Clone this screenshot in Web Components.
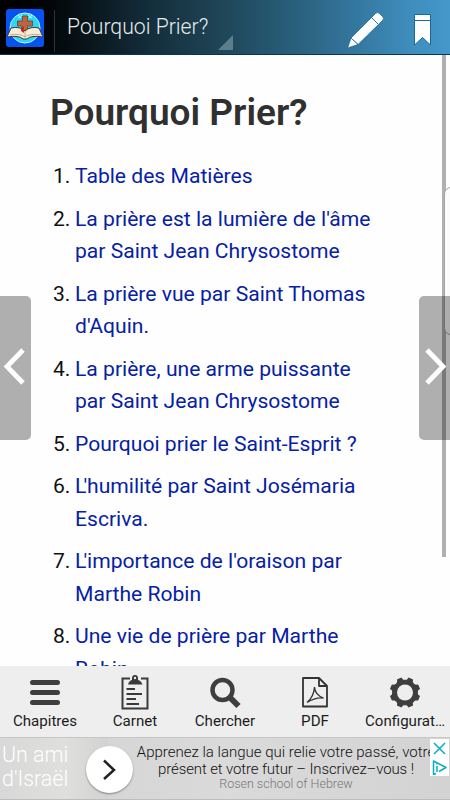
<!DOCTYPE html>
<html lang="fr">
<head>
<meta charset="utf-8">
<title>Pourquoi Prier?</title>
<style>
    html, body {
        margin: 0;
        height: 100%;
        overflow: hidden;
        font-family: Roboto, "Liberation Sans", sans-serif;
        background: #fefefe;
    }
</style>
</head>
<body>
<reader-app></reader-app>

<script>
class AppHeader extends HTMLElement {
    constructor() {
        super();
        this.attachShadow({mode: 'open'});
        this.shadowRoot.innerHTML = `
            <style>
                :host {
                    display: flex;
                    box-sizing: border-box;
                    flex: none;
                    height: 55px;
                    padding-left: 6px;
                    color: #e6ebed;
                    background: linear-gradient(90deg, #000 0, #020608 50px, #142e3c 150px, #1d4152 210px, #2a617f 300px, #3e8dbd 410px, #4498ca 450px);
                    border-bottom: 1px solid #07345c;
                }
                .logo { flex: none; margin-top: 9px; }
                .line { width: 1px; height: 42px; margin: 10px 0 0 10px; background: #2b3439; }
                .title {
                    position: relative;
                    width: 178px;
                    height: 54px;
                    line-height: 54px;
                    font-size: 21.2px;
                    font-weight: 300;
                    margin-left: 12px;
                    white-space: nowrap;
                }
                .corner { position: absolute; right: 12px; bottom: 4px; }
                .actions { flex: 1; }
                svg { display: block; }
            </style>
            <svg class="logo" width="38" height="38" viewBox="0 0 38 38">
                <rect width="38" height="38" rx="3" fill="#0753f2"/>
                <circle cx="19" cy="19" r="15" fill="#27d8fa" stroke="#c5f5ff" stroke-width="1"/>
                <path d="M12 9l4-3M26 9l-4-3M12 6l3 3M26 6l-3 3" stroke="#c2fbff" stroke-width="1"/>
                <path d="M16.5 7h5v5h5v5h-5v10h-5V17h-5v-5h5z" fill="#bd6540" stroke="#713c2b" stroke-width=".8"/>
                <path d="M1 28L5 19q9-2 14 3 5-5 14-3l4 9q-12-2-16 2h-4q-4-4-16-2z" fill="#f7ecd6" stroke="#47352b"/>
                <path d="M4 26q10-2 15 2 5-4 16-2M19 22v6" fill="none" stroke="#a89478" stroke-width=".7"/>
                <path d="M15 18h3v6l-3-2z" fill="#c8242b"/>
            </svg>
            <div class="line"></div>
            <div class="title"><slot></slot>
                <svg class="corner" width="15" height="15"><path d="M15 0v15H0z" fill="#5b7d8e"/></svg>
            </div>
            <div class="actions">
                <svg width="205" height="54" viewBox="245 0 205 54">
                    <g fill="#fff" stroke="#176aa0" stroke-width=".8">
                        <path d="M371.500 17.500l4-4q2-2 4 0l3 3q2 2 0 4l-4 4z"/>
                        <path d="M371.500 17.500l7 7-20.500 20-7-6.500z"/>
                        <path d="M351 38l7 6.500-10.500 3.500z"/>
                    </g>
                    <path d="M414.500 14.500h16v30.500l-8-7.500-8 7.500zM414.500 20.500h16" fill="#fff" stroke="#176aa0"/>
                </svg>
            </div>
        `;
    }
}

class BookPage extends HTMLElement {
    constructor() {
        super();
        this.attachShadow({mode: 'open'});
        this.shadowRoot.innerHTML = `
            <style>
                :host {
                    display: block;
                    position: relative;
                    flex: 1;
                    min-height: 0;
                    overflow: hidden;
                    background: #fefefe;
                }
                h1 {
                    margin: 0;
                    padding: 33px 0 0 50px;
                    font-size: 37px;
                    line-height: 50px;
                    font-weight: 600;
                    color: #303030;
                    white-space: nowrap;
                }
                ol {
                    margin: 22px 0 0;
                    padding: 0 60px 0 75px;
                }
                .track {
                    position: absolute;
                    left: 442px;
                    top: 0;
                    width: 4px;
                    height: 502px;
                    background: #b0b0b0;
                }
                .thumb {
                    position: absolute;
                    box-sizing: border-box;
                    left: 444px;
                    top: 132px;
                    width: 14px;
                    height: 148px;
                    border: 1px solid #a4a4a4;
                    border-radius: 8px;
                    background: #fbfbfb;
                }
            </style>
            <h1><slot name="title"></slot></h1>
            <ol><slot></slot></ol>
            <div class="track"></div>
            <div class="thumb"></div>
            <slot name="nav"></slot>
        `;
    }
}

class ChapterLink extends HTMLElement {
    constructor() {
        super();
        this.attachShadow({mode: 'open'});
    }

    connectedCallback() {
        this.shadowRoot.innerHTML = `
            <style>
                :host {
                    display: flex;
                    margin: 0 0 10px -22px;
                    font-size: 21.1px;
                    font-weight: 370;
                    line-height: 32.5px;
                    white-space: nowrap;
                }
                .number { width: 22px; flex: none; color: #111; }
                a { color: #0621a5; }
                ::slotted(.kern) { letter-spacing: -3px; }
            </style>
            <span class="number">${this.getAttribute('number')}.</span>
            <a><slot></slot></a>
        `;
    }
}

class PageTurn extends HTMLElement {
    constructor() {
        super();
        this.attachShadow({mode: 'open'});
    }

    connectedCallback() {
        const next = this.hasAttribute('next');
        const arrow = next ? 'M8 54L24 70.500 8 87' : 'M23 54L7 70.500 23 87';
        this.shadowRoot.innerHTML = `
            <style>
                :host {
                    position: absolute;
                    top: 241px;
                    ${next ? 'right: 0' : 'left: 0'};
                    width: 31px;
                    height: 144px;
                    background: rgba(0, 0, 0, 0.31);
                    border-radius: ${next ? '5px 0 0 5px' : '0 5px 5px 0'};
                }
                svg { display: block; }
            </style>
            <svg width="31" height="144"><path d="${arrow}" fill="none" stroke="#fff" stroke-width="4.800"/></svg>
        `;
    }
}

// Gear outline: eight teeth around a ring
function gearPath() {
    let d = '';
    for (let i = 0; i < 8; i++) {
        const angle = (i * 45 + 22.5) * Math.PI / 180;
        const point = (r, t) => (20 + r * Math.sin(angle + t)).toFixed(2) + ' ' + (19.5 - r * Math.cos(angle + t)).toFixed(2);
        d += `${i ? 'L' : 'M'}${point(14.8, -0.13)}L${point(14.8, 0.13)}L${point(12.8, 0.2)}Q${point(11.6, 0.39)} ${point(12.8, 0.585)}`;
    }
    return d + 'z';
}

const icons = {
    list: '<path d="M7.500 9.500h25M7.500 19.500h25M7.500 29.500h25" stroke="#3e3e3e" stroke-width="5" stroke-linecap="round"/>',
    clipboard: `
        <path d="M15 5.500H7.500v30h25v-30H26" fill="none" stroke="#3a3a3a" stroke-width="2"/>
        <path d="M13 11.500q1-4 4-4.500-.5-5 3-5t3 5q3 .5 4.500 4.500z" fill="#3a3a3a"/><circle cx="20" cy="5" r="1.200" fill="#eee"/>
        <path d="M11.500 16h8.500M11.500 21h15.500M11.500 26h9.500M11.500 31h12.500" stroke="#3a3a3a" stroke-width="2"/>`,
    search: '<circle cx="17.500" cy="17" r="10" fill="none" stroke="#3e3e3e" stroke-width="4.500"/><path d="M24.500 24l9 9" stroke="#3e3e3e" stroke-width="6"/>',
    pdf: `
        <path d="M8 5h16l8 8v20.500H8zM24 5v8h8" fill="none" stroke="#333" stroke-width="1.800" stroke-linejoin="round"/>
        <path d="M12 29.500q7-6 7.500-15.500.5 8 9 11-8-1-16.500 4.500" fill="none" stroke="#333" stroke-width="1.300"/>`,
    gear: `<path d="${gearPath()}" fill="#3e3e3e" stroke="#3e3e3e" stroke-width="1.200" stroke-linejoin="round"/><circle cx="20" cy="19.500" r="8" fill="#eee"/>`
};

class ToolButton extends HTMLElement {
    constructor() {
        super();
        this.attachShadow({mode: 'open'});
    }

    connectedCallback() {
        this.shadowRoot.innerHTML = `
            <style>
                :host {
                    display: flex;
                    flex-direction: column;
                    align-items: center;
                    width: 90px;
                    padding-top: 7px;
                    font-size: 15.1px;
                    font-weight: 375;
                    line-height: 20px;
                    color: #1c1c1c;
                }
                svg { display: block; margin-bottom: -2px; }
                span { white-space: nowrap; }
            </style>
            <svg width="40" height="40" viewBox="0 0 40 40">${icons[this.getAttribute('icon')]}</svg>
            <span><slot></slot></span>
        `;
    }
}

class ToolBar extends HTMLElement {
    constructor() {
        super();
        this.attachShadow({mode: 'open'});
        this.shadowRoot.innerHTML = `
            <style>
                :host {
                    display: flex;
                    flex: none;
                    height: 71px;
                    background: #eee;
                }
            </style>
            <slot></slot>
        `;
    }
}

class AdBanner extends HTMLElement {
    constructor() {
        super();
        this.attachShadow({mode: 'open'});
        this.shadowRoot.innerHTML = `
            <style>
                :host {
                    display: flex;
                    position: relative;
                    box-sizing: border-box;
                    flex: none;
                    height: 63px;
                    border-top: 1px solid #c6c6c6;
                    border-bottom: 1px solid #bdbdbd;
                    background: linear-gradient(90deg, #d2d2d2, #dadada 50%, #d3d3d3);
                }
                .brand {
                    box-sizing: border-box;
                    flex: none;
                    width: 108px;
                    padding: 5px 0 0 2px;
                    font-size: 21.4px;
                    line-height: 24px;
                    font-weight: 300;
                    color: #fff;
                    background: linear-gradient(90deg, #d8d8d8, #dfdfdd 60%, #d2d2d2);
                }
                .go {
                    position: absolute;
                    left: 86px;
                    top: 8px;
                    width: 47px;
                    height: 47px;
                    border-radius: 50%;
                    background: #fff;
                    box-shadow: 0 1px 2px rgba(0, 0, 0, 0.4);
                }
                .copy {
                    flex: none;
                    width: 356px;
                    padding-top: 6px;
                    text-align: center;
                    font-size: 15px;
                    line-height: 16.500px;
                    font-weight: 300;
                    color: #111;
                    white-space: nowrap;
                }
                ::slotted(.tight) { letter-spacing: -0.12px; }
                .small { font-size: 12.5px; line-height: 13px; color: #777; }
                .marks {
                    position: absolute;
                    right: 1px;
                    top: 1px;
                    width: 19px;
                    height: 37px;
                    background: #fff;
                }
                svg { display: block; }
            </style>
            <div class="brand"><slot name="brand"></slot></div>
            <div class="go"><svg width="47" height="47"><path d="M18 14.500l10 9.500-10 9" fill="none" stroke="#222" stroke-width="2.500"/></svg></div>
            <div class="copy"><slot></slot><div class="small"><slot name="advertiser"></slot></div></div>
            <div class="marks">
                <svg width="19" height="37" fill="none" stroke="#08aec8" stroke-width="1.500">
                    <path d="M4 4l11 11M15 4L4 15M6 34.500l-2.500 1V22L16 28.500l-7 4M7 27v6" stroke-linejoin="round"/>
                    <path d="M7 24v1.600"/>
                </svg>
            </div>
        `;
    }
}

class ReaderApp extends HTMLElement {
    constructor() {
        super();
        this.attachShadow({mode: 'open'});
        this.shadowRoot.innerHTML = `
            <style>
                :host {
                    display: flex;
                    flex-direction: column;
                    width: 450px;
                    height: 800px;
                    overflow: hidden;
                }
            </style>
            <app-header>Pourquoi Prier?</app-header>
            <book-page>
                <span slot="title">Pourquoi Prier?</span>
                <chapter-link number="1">Table des Matières</chapter-link>
                <chapter-link number="2">La prière est la lumière de l'âme<br>par Saint Jean Chrysostome</chapter-link>
                <chapter-link number="3">La prière vue par Saint Thomas<br>d'Aquin.</chapter-link>
                <chapter-link number="4">La prière, une arme puissante<br>par Saint Jean Chrysostome</chapter-link>
                <chapter-link number="5">Pourquoi prier le Saint-Esprit ?</chapter-link>
                <chapter-link number="6"><span class="kern">L</span>'humilité par Saint Josémaria<br>Escriva.</chapter-link>
                <chapter-link number="7"><span class="kern">L</span>'importance de l'oraison par<br>Marthe Robin</chapter-link>
                <chapter-link number="8">Une vie de prière par Marthe<br>Robin</chapter-link>
                <page-turn slot="nav"></page-turn>
                <page-turn slot="nav" next></page-turn>
            </book-page>
            <tool-bar>
                <tool-button icon="list">Chapitres</tool-button>
                <tool-button icon="clipboard">Carnet</tool-button>
                <tool-button icon="search">Chercher</tool-button>
                <tool-button icon="pdf">PDF</tool-button>
                <tool-button icon="gear">Configurat…</tool-button>
            </tool-bar>
            <ad-banner>
                <span slot="brand">Un ami<br>d'Israël</span>
                Apprenez la langue qui relie votre passé, votre<br><span class="tight">présent et votre futur – Inscrivez–vous !</span>
                <span slot="advertiser">Rosen school of Hebrew</span>
            </ad-banner>
        `;
    }
}

customElements.define('app-header', AppHeader);
customElements.define('book-page', BookPage);
customElements.define('chapter-link', ChapterLink);
customElements.define('page-turn', PageTurn);
customElements.define('tool-button', ToolButton);
customElements.define('tool-bar', ToolBar);
customElements.define('ad-banner', AdBanner);
customElements.define('reader-app', ReaderApp);
</script>
</body>
</html>
